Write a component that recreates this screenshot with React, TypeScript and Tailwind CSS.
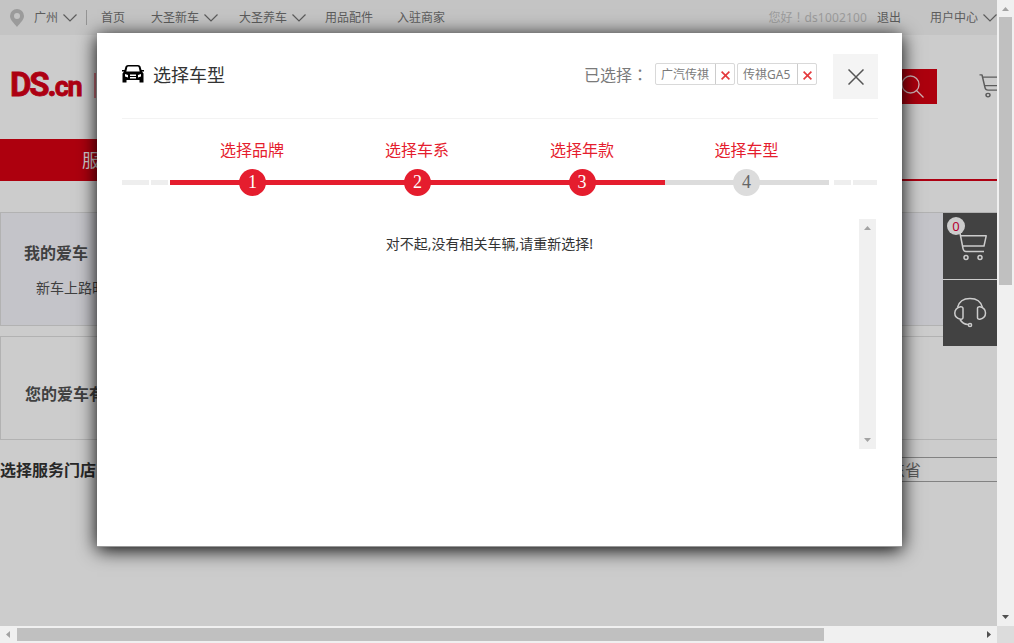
import type { ReactNode } from "react";

function Chevron() {
  return (
    <svg width="14" height="8" viewBox="0 0 14 8" fill="none" stroke="#5c5c5c" strokeWidth="1.2" className="shrink-0">
      <path d="M.5.5 7 7 13.5.5" />
    </svg>
  );
}

function Cart({ color, className }: { color: string; className: string }) {
  return (
    <svg viewBox="0 0 30 29" preserveAspectRatio="none" fill="none" stroke={color} strokeWidth="1.5" className={className}>
      <path d="M.5 1H3L6 16.500Q6.500 19.500 9 19.500H27M3.500 3.800H29.200L27 14H6" strokeLinejoin="round" />
      <circle cx="9" cy="25.5" r="2" />
      <circle cx="23" cy="25.5" r="2" />
    </svg>
  );
}

function TopBar() {
  return (
    <div className="flex h-[35px] shrink-0 items-center bg-[#c4c4c4] pl-[10px] text-[12px] leading-[18px] whitespace-nowrap text-[#5c5c5c]">
      <svg width="14" height="18" viewBox="0 0 14 18" className="shrink-0">
        <path d="M7 0a7 7 0 0 0-7 7c0 4 4 7 7 11 3-4 7-7 7-11a7 7 0 0 0-7-7Zm0 4a3 3 0 1 1 0 6 3 3 0 0 1 0-6Z" fill="#9b9b9b" fillRule="evenodd" />
      </svg>
      <span className="ml-[10px] mr-[5px]">广州</span>
      <Chevron />
      <span className="ml-[9px] h-[15px] w-px bg-[#949494]" />
      <span className="ml-[14px]">首页</span>
      <span className="ml-[26px] mr-[5px]">大圣新车</span>
      <Chevron />
      <span className="ml-[21px] mr-[5px]">大圣养车</span>
      <Chevron />
      <span className="ml-[19px]">用品配件</span>
      <span className="ml-[24px]">入驻商家</span>
      <span className="ml-auto text-[#9c9c9c]">
        您好<span className="font-['Noto_Sans_CJK_TC',sans-serif]">！</span>
        <span className="tracking-[0.15px]">ds1002100</span>
      </span>
      <span className="ml-[10px]">退出</span>
      <span className="ml-[29px] mr-[5px]">用户中心</span>
      <Chevron />
    </div>
  );
}

function Header() {
  return (
    <div className="flex h-[104px] shrink-0 items-start">
      <div className="ml-[10px] mt-[30px] flex h-[40px] w-[79px] items-baseline font-[Roboto,sans-serif] font-bold leading-[40px] text-[#ad0012] [-webkit-text-stroke:0.8px_#ad0012]">
        <span className="text-[33px] tracking-[-2.2px]">DS.</span>
        <span className="text-[27px] tracking-[-1.2px]">cn</span>
      </div>
      <span className="ml-[5px] mt-[38px] h-[25px] w-[2px] bg-[#c8707a]" />
      <div className="ml-auto mt-[34px] flex h-[35px] w-[57px] items-center bg-[#ad000e] pl-[21px]">
        <svg width="24" height="24" viewBox="0 0 24 24" fill="none" stroke="#d0b4b6" strokeWidth="1.3">
          <circle cx="9.5" cy="9.5" r="8.5" />
          <path d="m15.5 15.5 7 7" />
        </svg>
      </div>
      <div className="ml-[42px] mt-[39px] w-[18px] overflow-hidden">
        <Cart color="#5c5c5c" className="h-[24px] w-[30px] max-w-none" />
      </div>
    </div>
  );
}

function PageBody() {
  return (
    <>
      <div className="h-[42px] shrink-0 border-b-2 border-[#ad0012]">
        <div className="h-[42px] w-[250px] bg-[#ad000e] pl-[82px] text-[18px] leading-[43px] text-[#d5cccd]">服务</div>
      </div>
      <div className="mt-[31px] h-[114px] shrink-0 border border-r-0 border-[#b2b2b2] bg-[#c4c4c9] pl-[23px] pt-[28px] text-[#404040]">
        <div className="text-[16px] font-bold leading-[24px]">我的爱车</div>
        <div className="mt-[13px] pl-[12px] text-[14px] leading-[20px]">新车上路时间</div>
      </div>
      <div className="mt-[10px] h-[104px] shrink-0 border border-r-0 border-[#b2b2b2] pl-[24px] pt-[45px] text-[16px] font-bold leading-[24px] text-[#404040]">
        您的爱车有
      </div>
      <div className="mt-[17px] flex h-[25px] shrink-0 items-center justify-between text-[16px] leading-[24px]">
        <span className="font-bold text-[#282828]">选择服务门店：</span>
        <div className="h-[25px] w-[130px] border-y border-[#828282] pl-[6px] leading-[25px] text-[#5c5c5c]">广东省</div>
      </div>
    </>
  );
}

function SideTools() {
  return (
    <div className="absolute left-[943px] top-[213px] flex w-[54px] flex-col gap-px bg-[#ccc]">
      <div className="relative h-[66px] bg-[#424242] pl-[14px] pt-[19px]">
        <Cart color="#ccc" className="h-[29px] w-[30px]" />
        <span className="absolute left-[4px] top-[4px] h-[18px] w-[18px] rounded-full bg-[#ccc] text-center text-[13px] leading-[19px] text-[#b5002f]">0</span>
      </div>
      <div className="h-[66px] bg-[#424242] pl-[11px] pt-[17px]">
        <svg width="33" height="31" viewBox="0 0 33 31" fill="none" stroke="#ccc" strokeWidth="1.5">
          <path d="M3.5 10.5C5 4.5 10 1.5 16 1.5s11 3 12.500 9" />
          <path d="M9 11.500Q8.800 9.500 6.500 9.800Q1 11 .8 16T6.500 22.200Q8.800 22.500 9 20.500ZM23.500 11.500Q23.500 9.500 26 9.800Q31.500 11 31.500 16T26 22.200Q23.500 22.500 23.500 20.500ZM6 22.500Q9 27.500 14 27.500" />
          <circle cx="16" cy="28" r="1.600" />
        </svg>
      </div>
    </div>
  );
}

function Tag({ children, className }: { children: ReactNode; className: string }) {
  return (
    <div className={`flex h-[22px] rounded-[2px] border border-[#d9d9d9] text-[12px] leading-[21px] text-[#7a7a7a] ${className}`}>
      <span className="flex-1 pl-[5px]">{children}</span>
      <span className="flex w-[19px] items-center justify-center border-l border-[#ccc]">
        <svg width="9" height="9" viewBox="0 0 9 9" stroke="#e4393c" strokeWidth="1.600" className="mt-[2px]">
          <path d="m.6.6 7.800 7.800m0-7.800L.6 8.400" />
        </svg>
      </span>
    </div>
  );
}

const steps = [
  { label: "选择品牌", active: true },
  { label: "选择车系", active: true },
  { label: "选择年款", active: true },
  { label: "选择车型", active: false },
];

function Steps() {
  return (
    <div className="flex h-[77px] items-end">
      <div className="mb-[11px] flex h-[5px] w-[48px] gap-[2px]">
        <span className="w-[27px] bg-[#eee]" />
        <span className="w-[17px] bg-[#eee]" />
      </div>
      {steps.map((step, i) => (
        <div key={step.label} className={i === 3 ? "w-[164px]" : "w-[165px]"}>
          <div className="pr-px text-center text-[16px] leading-[24px] text-[#e51d2e]">{step.label}</div>
          <div className="mt-[7px] grid h-[27px] grid-cols-1 grid-rows-1 items-center justify-items-center">
            <div className={`col-start-1 row-start-1 h-[5px] w-full ${step.active ? "bg-[#e51d2e]" : "bg-[#dcdcdc]"}`} />
            <div
              className={`col-start-1 row-start-1 h-[27px] w-[27px] rounded-full text-center font-['Liberation_Serif',serif] text-[18px] leading-[26px] ${i > 1 ? "mr-px" : ""} ${step.active ? "bg-[#e51d2e] text-white" : "bg-[#dcdcdc] text-[#666]"}`}
            >
              {i + 1}
            </div>
          </div>
        </div>
      ))}
      <div className="mb-[11px] ml-[5px] flex h-[5px] gap-[2px]">
        <span className="w-[17px] bg-[#eee]" />
        <span className="w-[24px] bg-[#eee]" />
      </div>
    </div>
  );
}

function Dialog() {
  return (
    <div className="absolute left-[97px] top-[33px] h-[514px] w-[805px] border-b border-[#999] bg-white pl-[25px] shadow-[0_3px_18px_#000]">
      <div className="flex h-[86px] w-[756px] items-start border-b border-[#f3f3f3]">
        <svg width="22" height="18" viewBox="0 0 22 18" className="mt-[32px] shrink-0">
          <path
            fill="#000"
            fillRule="evenodd"
            d="M6 0h10q2 0 2.500 1.500L19.500 5H22v1.500h-2l1.500 2V17.500h-4V15h-13v2.500H.5V8.500l1.500-2H0V5h2.500l1-3.500Q4 0 6 0Zm.300 1.500q-.8 0-1 .8L4.300 6.500h13.400l-1-4.200q-.2-.8-1-.8ZM3 9v2.500l3 1V10ZM8 9.500V11h6V9.500Zm11-.500-3 1v2.500l3-1ZM8 12v1.500h6V12Z"
          />
        </svg>
        <span className="ml-[9px] mt-[29px] text-[18px] leading-[27px] text-[#333]">选择车型</span>
        <span className="ml-auto mt-[29px] text-[16px] leading-[24px] text-[#7a7a7a]">
          已选择<span className="font-['Noto_Sans_CJK_TC',sans-serif]">：</span>
        </span>
        <Tag className="ml-[7px] mt-[30px] w-[80px]">广汽传祺</Tag>
        <Tag className="ml-[2px] mt-[30px] w-[80px]">传祺GA5</Tag>
        <div className="ml-[16px] mt-[21px] flex h-[45px] w-[45px] items-center justify-center bg-[#f4f4f4]">
          <svg width="16" height="16" viewBox="0 0 16 16" stroke="#555" strokeWidth="1.500">
            <path d="m.5.5 15 15m0-15-15 15" />
          </svg>
        </div>
      </div>
      <Steps />
      <div className="mt-[23px] flex h-[230px] w-[754px]">
        <div className="flex-1 pr-[2px] pt-[14px] text-center text-[14px] leading-[21px] text-[#333]">对不起,没有相关车辆,请重新选择!</div>
        <div className="flex w-[17px] flex-col items-center justify-between bg-[#f0f0f0] py-[7px]">
          <svg width="7" height="4" viewBox="0 0 7 4" fill="#a3a3a3"><path d="M3.500 0 7 4H0Z" /></svg>
          <svg width="7" height="4" viewBox="0 0 7 4" fill="#a3a3a3"><path d="M0 0h7L3.500 4Z" /></svg>
        </div>
      </div>
    </div>
  );
}

export default function App() {
  return (
    <div className="grid h-[643px] w-[1014px] grid-cols-[997px_17px] grid-rows-[626px_17px] overflow-hidden bg-[#ccc] font-['Noto_Sans','Noto_Sans_CJK_SC',sans-serif]">
      <div className="relative flex flex-col overflow-hidden">
        <TopBar />
        <Header />
        <PageBody />
        <SideTools />
        <Dialog />
      </div>
      <div className="flex flex-col items-center bg-[#f0f0f0] pt-[7px]">
        <svg width="7" height="4" viewBox="0 0 7 4" fill="#a3a3a3" className="shrink-0"><path d="M3.500 0 7 4H0Z" /></svg>
        <div className="mt-[6px] h-[268px] w-[13px] bg-[#c0c0c0]" />
        <svg width="7" height="4" viewBox="0 0 7 4" fill="#505050" className="mb-[7px] mt-auto"><path d="M0 0h7L3.500 4Z" /></svg>
      </div>
      <div className="flex items-center bg-[#f0f0f0] px-[6px]">
        <svg width="4" height="7" viewBox="0 0 4 7" fill="#a3a3a3"><path d="M4 0v7L0 3.500Z" /></svg>
        <div className="ml-[7px] h-[13px] w-[807px] bg-[#c0c0c0]" />
        <svg width="4" height="7" viewBox="0 0 4 7" fill="#505050" className="ml-auto"><path d="M0 0v7l4-3.500Z" /></svg>
      </div>
      <div className="bg-[#dcdcdc]" />
    </div>
  );
}
